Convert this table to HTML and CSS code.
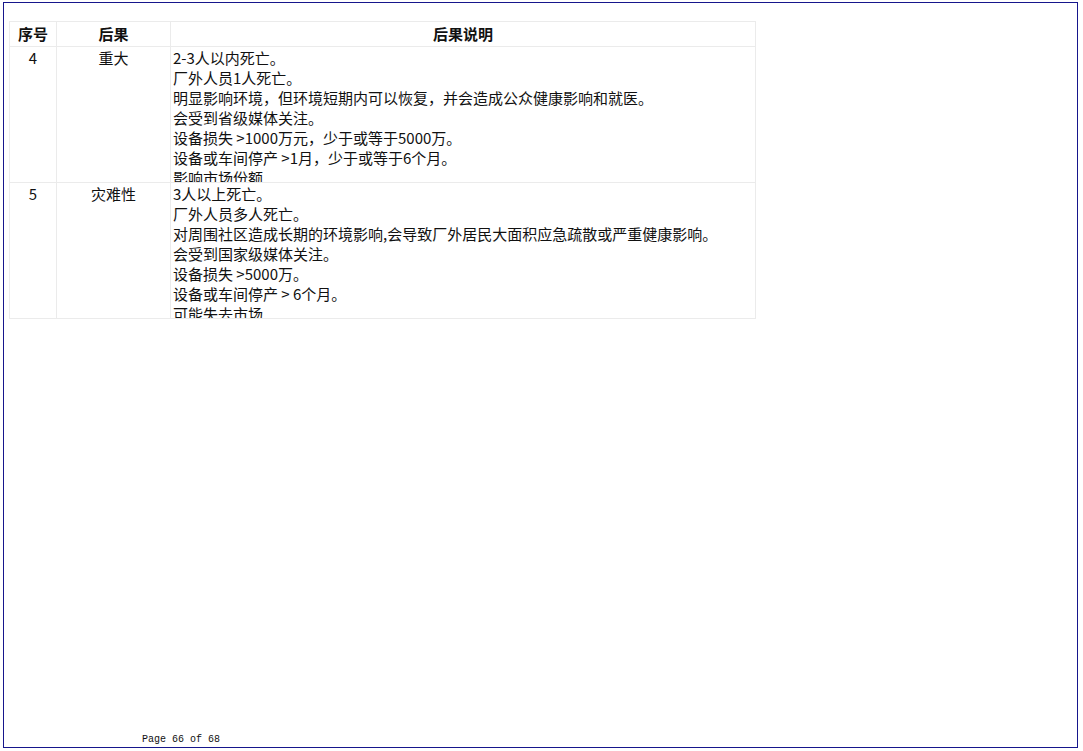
FILE: index.html
```html
<!DOCTYPE html>
<html lang="zh">
<head>
<meta charset="utf-8">
<link rel="stylesheet" href="styles.css">
</head>
<body>
<div class="page">
  <table class="grid">
    <colgroup>
      <col class="c1"><col class="c2"><col class="c3">
    </colgroup>
    <thead>
      <tr><th>序号</th><th>后果</th><th>后果说明</th></tr>
    </thead>
    <tbody>
      <tr>
        <td class="num">4</td>
        <td class="lvl">重大</td>
        <td class="desc"><div class="clip">2-3人以内死亡。<br>厂外人员1人死亡。<br>明显影响环境，但环境短期内可以恢复，并会造成公众健康影响和就医。<br>会受到省级媒体关注。<br>设备损失 &gt;1000万元，少于或等于5000万。<br>设备或车间停产 &gt;1月，少于或等于6个月。<br>影响市场份额</div></td>
      </tr>
      <tr>
        <td class="num">5</td>
        <td class="lvl">灾难性</td>
        <td class="desc"><div class="clip">3人以上死亡。<br>厂外人员多人死亡。<br>对周围社区造成长期的环境影响,会导致厂外居民大面积应急疏散或严重健康影响。<br>会受到国家级媒体关注。<br>设备损失 &gt;5000万。<br>设备或车间停产 &gt; 6个月。<br>可能失去市场</div></td>
      </tr>
    </tbody>
  </table>
  <div class="spacer"></div>
  <div class="footer">Page 66 of 68</div>
</div>
</body>
</html>
```

FILE: styles.css
```css
html, body {
  margin: 0;
  padding: 0;
  background: #ffffff;
}
body {
  font-family: "Noto Sans CJK SC", "Noto Sans", sans-serif;
  color: #111;
}
.page {
  box-sizing: border-box;
  margin: 2px 0 0 3px;
  width: 1075px;
  height: 746px;
  border: 1px solid #16168c;
  display: flex;
  flex-direction: column;
  padding: 18px 0 0 5px;
}
.grid {
  border-collapse: collapse;
  table-layout: fixed;
  width: 746px;
  font-size: 15px;
}
.c1 { width: 47px; }
.c2 { width: 114px; }
.c3 { width: 585px; }
.grid th, .grid td {
  border: 1px solid #ebebeb;
  padding: 0;
  vertical-align: top;
}
.grid th {
  height: 24px;
  font-weight: bold;
  text-align: center;
  line-height: 24px;
  vertical-align: middle;
}
.grid td {
  line-height: 20px;
}
.grid td.num, .grid td.lvl {
  text-align: center;
  padding-top: 1px;
}
.grid td.desc {
  padding-left: 2px;
}
.clip {
  height: 135px;
  overflow: hidden;
  padding-top: 1px;
  box-sizing: border-box;
  white-space: nowrap;
}
.spacer {
  flex: 1;
}
.footer {
  font-family: "Liberation Mono", "DejaVu Sans Mono", monospace;
  font-size: 10px;
  line-height: 12px;
  padding-left: 133px;
  padding-bottom: 1px;
  color: #111;
}
```
